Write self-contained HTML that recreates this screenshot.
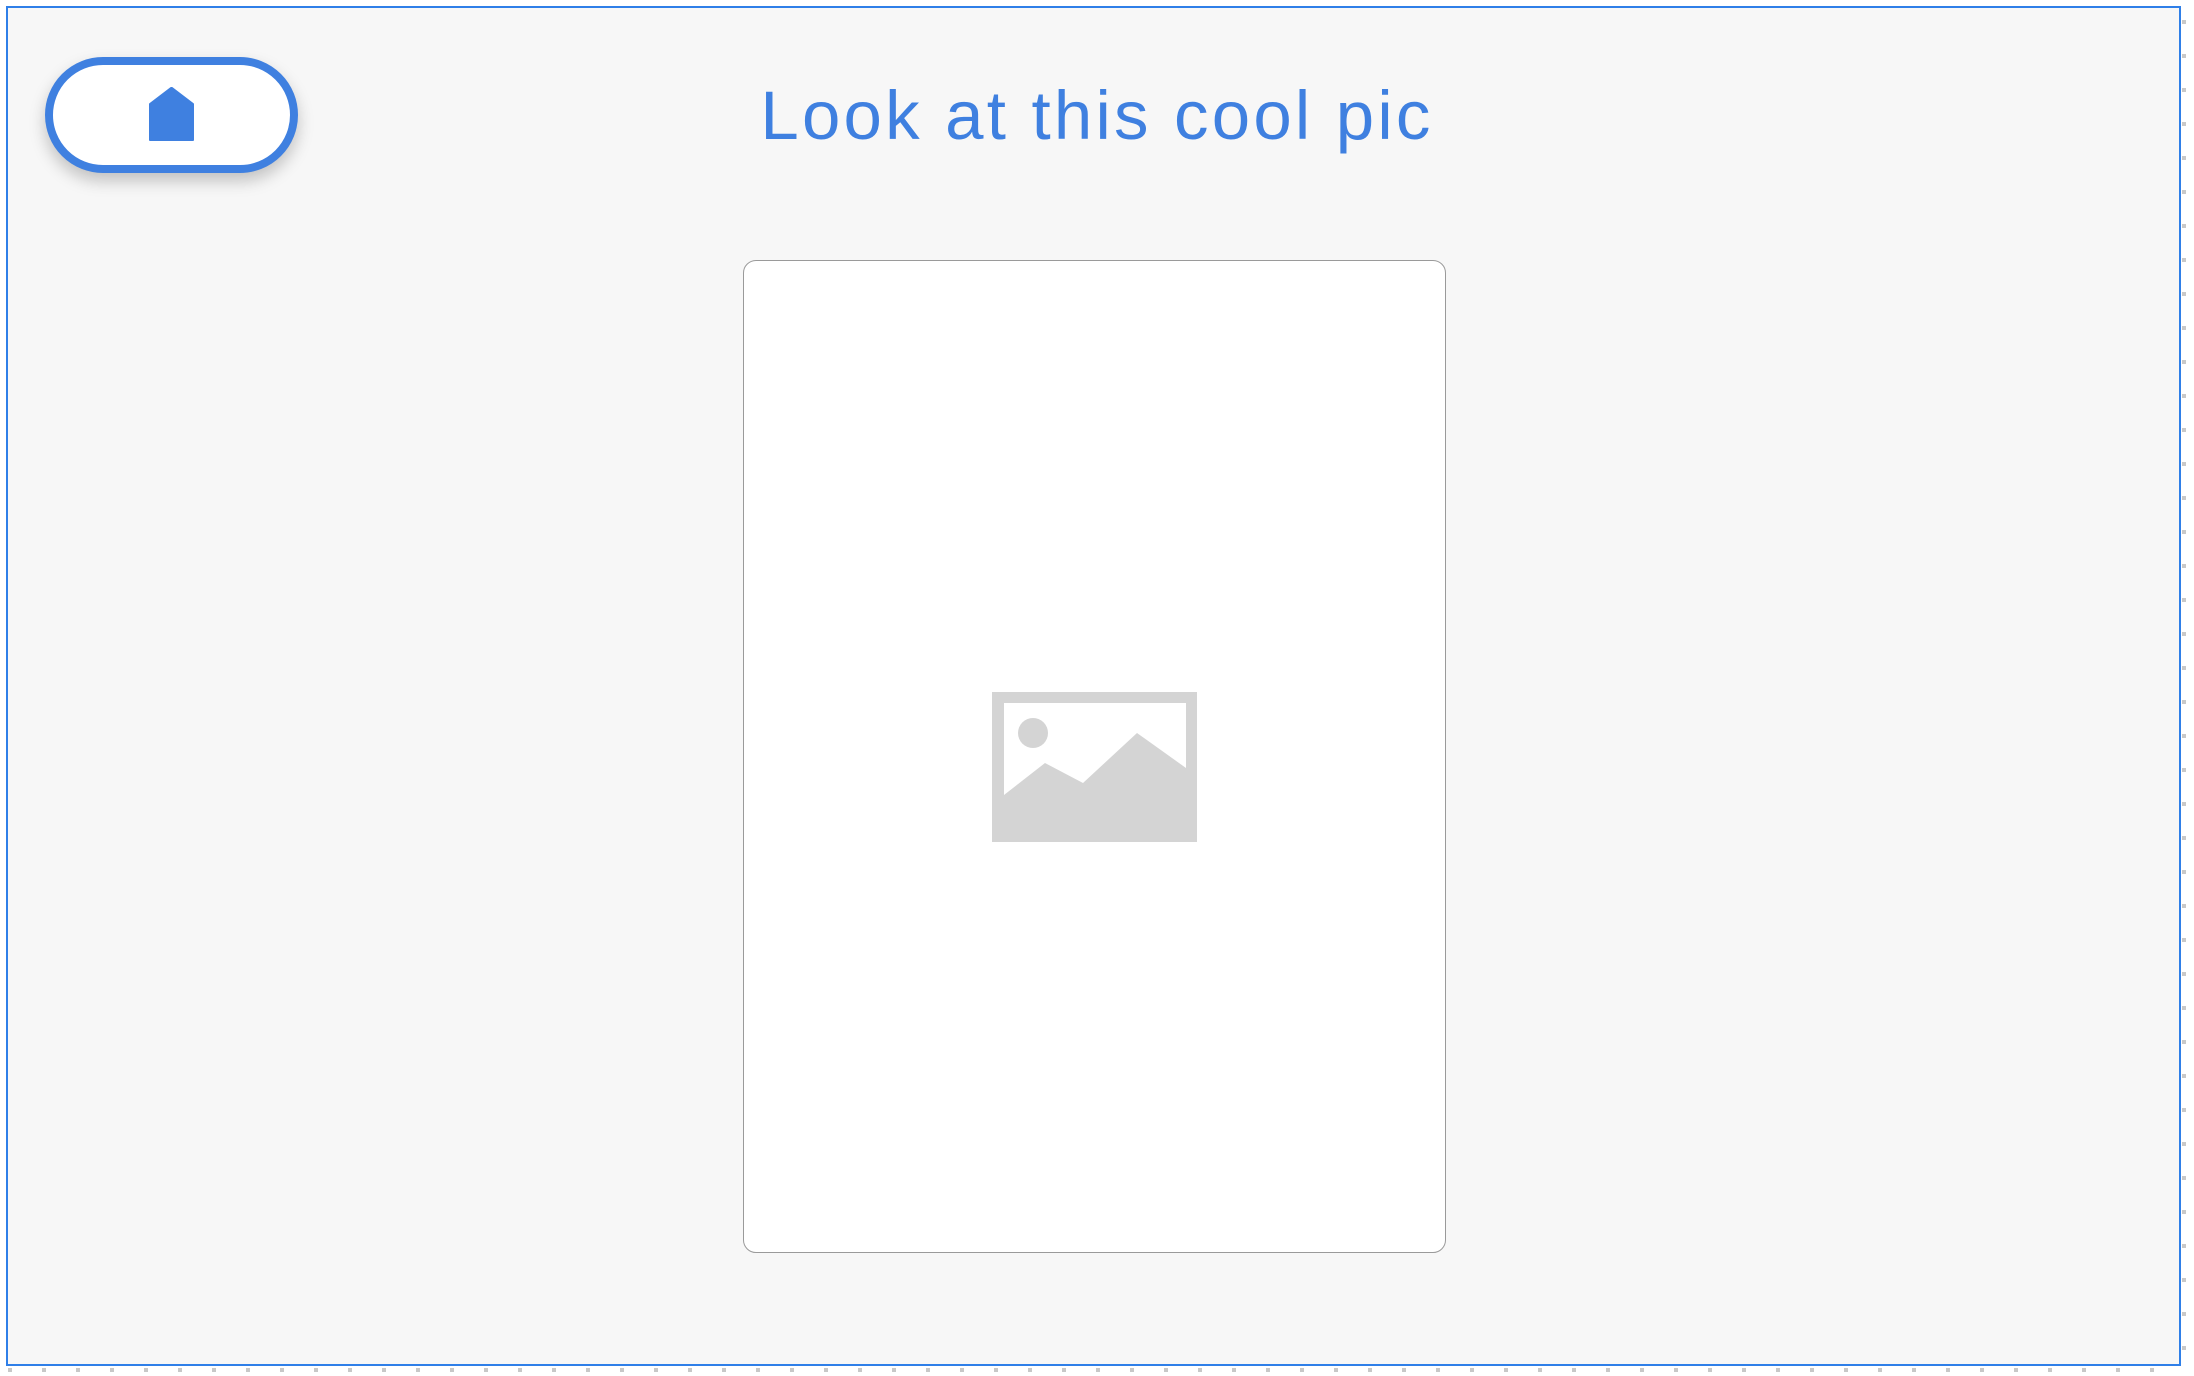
<!DOCTYPE html>
<html><head><meta charset="utf-8"><style>
html,body{margin:0;padding:0;}
body{width:2194px;height:1376px;background:#fff;position:relative;overflow:hidden;font-family:"Liberation Sans",sans-serif;}
.frame{position:absolute;left:6px;top:6px;width:2171px;height:1356px;border:2px solid #2f7fe8;background:#f7f7f7;}
.ticksb{position:absolute;left:6px;top:1368px;width:2176px;height:4px;background:repeating-linear-gradient(90deg,transparent 0,transparent 2px,#c8c8c8 2px,#c8c8c8 6px,transparent 6px,transparent 34px);}
.ticksr{position:absolute;left:2182px;top:6px;width:4px;height:1364px;background:repeating-linear-gradient(180deg,transparent 0,transparent 14px,#c8c8c8 14px,#c8c8c8 18px,transparent 18px,transparent 34px);}
.pill{position:absolute;left:45px;top:57px;width:237px;height:100px;border:8px solid #3f80e0;border-radius:60px;background:#fff;box-shadow:0 8px 16px rgba(0,0,0,0.22);}
.title{position:absolute;left:0;width:2194px;top:71px;text-align:center;font-size:69px;color:#3f80e0;line-height:90px;letter-spacing:3.2px;}
.card{position:absolute;left:743px;top:260px;width:701px;height:991px;border:1.5px solid #9a9a9a;border-radius:13px;background:#fff;}
</style></head><body>
<div class="frame"></div>
<div class="ticksb"></div>
<div class="ticksr"></div>
<div class="pill"></div>
<svg style="position:absolute;left:0;top:0" width="300" height="200"><path d="M150 104 L171 88 L172 88 L193 104 L193 140 L150 140 Z" fill="#3f80e0" stroke="#3f80e0" stroke-width="2" stroke-linejoin="round"/></svg>
<div class="title">Look at this cool pic</div>
<div class="card"></div>
<svg style="position:absolute;left:0;top:0" width="2194" height="1376">
<rect x="992" y="692" width="205" height="150" fill="#d4d4d4"/>
<rect x="1004" y="703" width="182" height="120" fill="#fff"/>
<polygon points="1004,795 1045,763 1083,783 1137,733 1186,768 1186,830 1004,830" fill="#d4d4d4"/>
<circle cx="1033" cy="733" r="15" fill="#d4d4d4"/>
</svg>
</body></html>
